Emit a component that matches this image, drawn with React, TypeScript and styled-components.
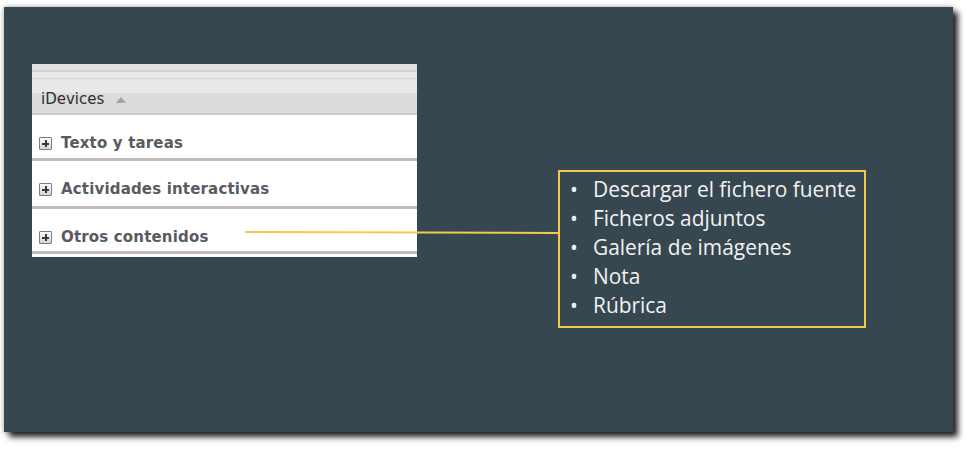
import React from "react";
import styled, { createGlobalStyle } from "styled-components";

const Global = createGlobalStyle`
  html, body { margin: 0; padding: 0; background: #ffffff; }
  body { width: 976px; height: 455px; overflow: hidden; }
`;

const Stage = styled.div`
  padding: 7px 0 0 4px;
`;

const Slide = styled.div`
  position: relative;
  box-sizing: border-box;
  width: 949px;
  height: 425px;
  background: #37474f;
  box-shadow: 5px 5px 6px rgba(0, 0, 0, 0.85), 0 0 5px rgba(0, 0, 0, 0.35);
  display: flex;
  align-items: flex-start;
  padding: 57px 0 0 28px;
`;

const Shot = styled.div`
  width: 385px;
  background: #ffffff;
  display: flex;
  flex-direction: column;
  padding-bottom: 3px;
`;

const Strip = styled.div<{ $h: number; $c: string }>`
  height: ${(p) => p.$h}px;
  background: ${(p) => p.$c};
`;

const Header = styled.div`
  height: 36px;
  box-sizing: border-box;
  display: flex;
  align-items: center;
  gap: 12px;
  padding: 6px 0 0 9px;
  background: linear-gradient(#e8e8e8 0, #e8e8e8 14px, #dcdcdc 14px, #dcdcdc 100%);
  border-bottom: 2px solid #cbcbcb;
  font-family: "DejaVu Sans", Verdana, sans-serif;
  font-size: 15px;
  color: #2e2e30;
`;

const SortArrow = styled.span`
  width: 0;
  height: 0;
  border-left: 5.5px solid transparent;
  border-right: 5.5px solid transparent;
  border-bottom: 6px solid #a3a3a3;
  margin-top: 1px;
`;

const Row = styled.div<{ $h: number }>`
  height: ${(p) => p.$h}px;
  box-sizing: border-box;
  display: flex;
  align-items: center;
  gap: 9px;
  padding: 19px 0 0 7px;
  border-bottom: 3px solid #c4baba;
  font-family: "DejaVu Sans", Verdana, sans-serif;
  font-weight: bold;
  font-size: 15px;
  letter-spacing: 0.17px;
  line-height: 18px;
  color: #5a5a61;
`;

const Label = styled.span`
  align-self: flex-start;
`;

const PlusBox = styled.span`
  position: relative;
  box-sizing: border-box;
  align-self: flex-start;
  margin-top: 3px;
  width: 13px;
  height: 13px;
  border: 1px solid #7d7d7d;
  border-radius: 1px;
  background: linear-gradient(#ffffff, #d2d2d2);
  flex: none;
  &::before,
  &::after {
    content: "";
    position: absolute;
    background: #3a3a3a;
  }
  &::before { left: 2px; right: 2px; top: 4.5px; height: 2px; }
  &::after { top: 2px; bottom: 2px; left: 4.5px; width: 2px; }
`;

const Connector = styled.div`
  position: absolute;
  left: 241px;
  top: 224px;
  width: 314px;
  height: 2px;
  background: #f5c94e;
  transform: rotate(0.18deg);
  transform-origin: left center;
`;

const Callout = styled.ul`
  box-sizing: border-box;
  width: 308px;
  height: 158px;
  margin: 106px 0 0 141px;
  padding: 3px 0 0 0;
  border: 2px solid #f5c94e;
  list-style: none;
  font-family: "Open Sans", "Noto Sans", sans-serif;
  font-size: 20.9px;
  line-height: 29px;
  color: #f2f2f2;
`;

const Item = styled.li`
  display: flex;
  &::before {
    content: "•";
    width: 23px;
    padding-left: 10px;
    flex: none;
  }
`;

const groups: [string, number][] = [
  ["Texto y tareas", 46],
  ["Actividades interactivas", 48],
  ["Otros contenidos", 45],
];
const items = [
  "Descargar el fichero fuente",
  "Ficheros adjuntos",
  "Galería de imágenes",
  "Nota",
  "Rúbrica",
];

export default function App() {
  return (
    <>
      <Global />
      <Stage>
        <Slide>
          <Shot>
            <Strip $h={6} $c="#e0e0e0" />
            <Strip $h={2} $c="#d2d2d2" />
            <Strip $h={6} $c="#e9e9e9" />
            <Strip $h={1} $c="#d6d6d6" />
            <Header>
              <span>iDevices</span>
              <SortArrow />
            </Header>
            {groups.map(([g, h]) => (
              <Row key={g} $h={h}>
                <PlusBox />
                <Label>{g}</Label>
              </Row>
            ))}
          </Shot>
          <Connector />
          <Callout>
            {items.map((t) => (
              <Item key={t}>{t}</Item>
            ))}
          </Callout>
        </Slide>
      </Stage>
    </>
  );
}
